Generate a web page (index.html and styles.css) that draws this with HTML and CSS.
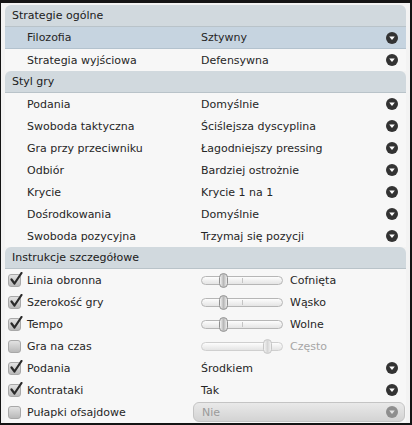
FILE: index.html
```html
<!DOCTYPE html>
<html lang="pl">
  <head>
    <meta charset="UTF-8" />
    <title>Taktyka</title>
    <link rel="stylesheet" href="styles.css">
  </head>
  <body>
    <div class="panel">
      <div class="section">Strategie ogólne</div>
      <div class="row selected"><span class="label">Filozofia</span><span class="value">Sztywny</span><svg class="arrow" viewBox="0 0 12 12"><circle cx="6" cy="6" r="6"/><path d="M3.2 4.6h5.6L6 8z"/></svg></div>
      <div class="row"><span class="label">Strategia wyjściowa</span><span class="value">Defensywna</span><svg class="arrow" viewBox="0 0 12 12"><circle cx="6" cy="6" r="6"/><path d="M3.2 4.6h5.6L6 8z"/></svg></div>

      <div class="section">Styl gry</div>
      <div class="row"><span class="label">Podania</span><span class="value">Domyślnie</span><svg class="arrow" viewBox="0 0 12 12"><circle cx="6" cy="6" r="6"/><path d="M3.2 4.6h5.6L6 8z"/></svg></div>
      <div class="row"><span class="label">Swoboda taktyczna</span><span class="value">Ściślejsza dyscyplina</span><svg class="arrow" viewBox="0 0 12 12"><circle cx="6" cy="6" r="6"/><path d="M3.2 4.6h5.6L6 8z"/></svg></div>
      <div class="row"><span class="label">Gra przy przeciwniku</span><span class="value">Łagodniejszy pressing</span><svg class="arrow" viewBox="0 0 12 12"><circle cx="6" cy="6" r="6"/><path d="M3.2 4.6h5.6L6 8z"/></svg></div>
      <div class="row"><span class="label">Odbiór</span><span class="value">Bardziej ostrożnie</span><svg class="arrow" viewBox="0 0 12 12"><circle cx="6" cy="6" r="6"/><path d="M3.2 4.6h5.6L6 8z"/></svg></div>
      <div class="row"><span class="label">Krycie</span><span class="value">Krycie 1 na 1</span><svg class="arrow" viewBox="0 0 12 12"><circle cx="6" cy="6" r="6"/><path d="M3.2 4.6h5.6L6 8z"/></svg></div>
      <div class="row"><span class="label">Dośrodkowania</span><span class="value">Domyślnie</span><svg class="arrow" viewBox="0 0 12 12"><circle cx="6" cy="6" r="6"/><path d="M3.2 4.6h5.6L6 8z"/></svg></div>
      <div class="row"><span class="label">Swoboda pozycyjna</span><span class="value">Trzymaj się pozycji</span><svg class="arrow" viewBox="0 0 12 12"><circle cx="6" cy="6" r="6"/><path d="M3.2 4.6h5.6L6 8z"/></svg></div>

      <div class="section">Instrukcje szczegółowe</div>
      <div class="row">
        <span class="check-label"><span class="box checked"><svg viewBox="0 0 14 14"><path d="M2.5 7.5l3 4L12.5 1"/></svg></span>Linia obronna</span>
        <span class="slider"><span class="tick"></span><span class="thumb"></span></span><span class="slider-text">Cofnięta</span>
      </div>
      <div class="row">
        <span class="check-label"><span class="box checked"><svg viewBox="0 0 14 14"><path d="M2.5 7.5l3 4L12.5 1"/></svg></span>Szerokość gry</span>
        <span class="slider"><span class="tick"></span><span class="thumb"></span></span><span class="slider-text">Wąsko</span>
      </div>
      <div class="row">
        <span class="check-label"><span class="box checked"><svg viewBox="0 0 14 14"><path d="M2.5 7.5l3 4L12.5 1"/></svg></span>Tempo</span>
        <span class="slider"><span class="tick"></span><span class="thumb"></span></span><span class="slider-text">Wolne</span>
      </div>
      <div class="row">
        <span class="check-label"><span class="box"></span>Gra na czas</span>
        <span class="slider disabled"><span class="thumb far"></span></span><span class="slider-text disabled">Często</span>
      </div>
      <div class="row">
        <span class="check-label"><span class="box checked"><svg viewBox="0 0 14 14"><path d="M2.5 7.5l3 4L12.5 1"/></svg></span>Podania</span>
        <span class="value">Środkiem</span><svg class="arrow" viewBox="0 0 12 12"><circle cx="6" cy="6" r="6"/><path d="M3.2 4.6h5.6L6 8z"/></svg>
      </div>
      <div class="row">
        <span class="check-label"><span class="box checked"><svg viewBox="0 0 14 14"><path d="M2.5 7.5l3 4L12.5 1"/></svg></span>Kontrataki</span>
        <span class="value">Tak</span><svg class="arrow" viewBox="0 0 12 12"><circle cx="6" cy="6" r="6"/><path d="M3.2 4.6h5.6L6 8z"/></svg>
      </div>
      <div class="row">
        <span class="check-label"><span class="box"></span>Pułapki ofsajdowe</span>
        <span class="combo"><span class="value">Nie</span><svg class="arrow" viewBox="0 0 12 12"><circle cx="6" cy="6" r="6"/><path d="M3.2 4.6h5.6L6 8z"/></svg></span>
      </div>
    </div>
  </body>
</html>
```

FILE: styles.css
```css
* {
  margin: 0;
  padding: 0;
  box-sizing: border-box;
}

body {
  background-color: #141414;
  font-family: "DejaVu Sans", Verdana, sans-serif;
  font-size: 11px;
  color: #262626;
}

.panel {
  margin: 3px 2px 0 1px;
  height: 420px;
  background: #f3f3f3;
  padding: 2px 4px 0 4px;
  overflow: hidden;
}

.section {
  height: 22px;
  line-height: 21px;
  padding-left: 7px;
  background: #d1d9de;
  border-bottom: 1px solid #b9c3c9;
  border-radius: 6px 6px 0 0;
  color: #202020;
}

.row {
  display: flex;
  align-items: center;
  height: 22px;
  background: #f7f7f7;
}

.row.selected {
  background: #c6d4e0;
  border-bottom: 1px solid #b3c2ce;
}

.label {
  width: 196px;
  padding-left: 22px;
}

.value {
  flex: 1;
}

.arrow {
  width: 12px;
  height: 12px;
  margin-right: 8px;
  flex-shrink: 0;
}

.arrow circle {
  fill: #333333;
}

.arrow path {
  fill: #ffffff;
}

/* Instrukcje szczegółowe */
.check-label {
  width: 196px;
  display: flex;
  align-items: center;
  padding-left: 3px;
}

.box {
  position: relative;
  width: 13px;
  height: 13px;
  margin-right: 6px;
  border: 1px solid #a8a8a8;
  border-radius: 3px;
  background: linear-gradient(#e2e2e2, #b9b9b9);
}

.box svg {
  position: absolute;
  left: 0;
  top: -3px;
  width: 14px;
  height: 14px;
}

.box path {
  fill: none;
  stroke: #2a2a2a;
  stroke-width: 2.2;
  stroke-linecap: round;
  stroke-linejoin: round;
}

.slider {
  position: relative;
  width: 82px;
  height: 9px;
  border: 1px solid #b6b6b6;
  border-radius: 5px;
  background: linear-gradient(#fdfdfd, #e4e4e4);
}

.slider .tick {
  position: absolute;
  left: 40px;
  top: 1px;
  width: 1px;
  height: 5px;
  background: #c4c4c4;
}

.slider .thumb {
  position: absolute;
  left: 17px;
  top: -4px;
  width: 9px;
  height: 15px;
  border: 1px solid #909090;
  border-radius: 5px;
  background: linear-gradient(90deg, #f2f2f2, #b8b8b8 50%, #eeeeee);
}

.slider .thumb.far {
  left: 61px;
}

.slider.disabled {
  border-color: #cfcfcf;
}

.slider.disabled .thumb {
  border-color: #c6c6c6;
  background: linear-gradient(90deg, #f4f4f4, #d6d6d6 50%, #f2f2f2);
}

.slider-text {
  margin-left: 7px;
}

.slider-text.disabled {
  color: #a6a6a6;
}

.combo {
  flex: 1;
  display: flex;
  align-items: center;
  height: 20px;
  margin-left: -8px;
  margin-right: 1px;
  padding-left: 8px;
  border: 1px solid #c4c4c4;
  border-radius: 6px;
  background: linear-gradient(#e9e9e9, #d3d3d3);
  color: #9a9a9a;
}

.combo .arrow {
  margin-right: 6px;
}

.combo .arrow circle {
  fill: #8e8e8e;
}

.combo .arrow path {
  fill: #e4e4e4;
}
```
